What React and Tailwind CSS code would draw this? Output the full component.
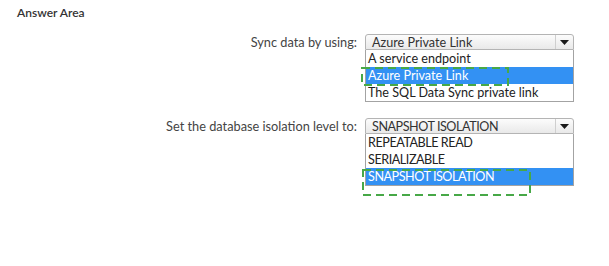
import React from "react";

const font = { fontFamily: "Lato, 'Open Sans', sans-serif" };

function Dropdown({ value, options, selected, mark, caps }) {
  const track = caps ? "tracking-[-0.45px]" : "";
  return (
    <div className="relative w-[209px]">
      {/* closed select header */}
      <div className="flex h-[16px] rounded-t-[3px] border border-[#b4b4b4] bg-gradient-to-b from-[#fcfcfc] to-[#e9e9e9]">
        <div className={`flex-1 pl-[6px] text-[12.6px] leading-[15px] text-[#333] overflow-hidden whitespace-nowrap ${track}`}>
          {value}
        </div>
        <div className="flex w-[18px] items-center justify-center border-l border-[#cfcfcf]">
          <svg width="9" height="5" viewBox="0 0 9 5">
            <path d="M0 0 L9 0 L4.5 5 Z" fill="#1a1a1a" />
          </svg>
        </div>
      </div>
      {/* open list */}
      <div className="border border-t-0 border-[#a3a3a3] bg-white">
        {options.map((o) => (
          <div
            key={o}
            className={`h-[17px] pl-[2px] text-[12.6px] leading-[17px] whitespace-nowrap ${track} ${
              o === selected ? "bg-[#3391f3] text-white" : "text-[#222]"
            }`}
          >
            {o}
          </div>
        ))}
      </div>
      {/* answer marker */}
      <svg
        className="absolute pointer-events-none"
        style={{ left: mark.x, top: mark.y }}
        width={mark.w}
        height={mark.h}
      >
        <rect
          x="1"
          y="1"
          width={mark.w - 2}
          height={mark.h - 2}
          fill="none"
          stroke="#47a847"
          strokeWidth="2"
          strokeDasharray="8 5"
        />
      </svg>
    </div>
  );
}

export default function App() {
  return (
    <div className="w-[609px] h-[266px] bg-white overflow-hidden" style={font}>
      <div className="pt-[5px] pl-[17px] text-[12px] leading-[16px] font-semibold text-[#333]">
        Answer Area
      </div>

      <div className="mt-[13px] flex items-start">
        <div className="w-[358px] pr-[1px] text-right text-[12.75px] leading-[16px] text-[#444]">
          Sync data by using:
        </div>
        <div className="ml-[7px]">
          <Dropdown
            value="Azure Private Link"
            options={["A service endpoint", "Azure Private Link", "The SQL Data Sync private link"]}
            selected="Azure Private Link"
            mark={{ x: -4, y: 33, w: 148, h: 19 }}
          />
        </div>
      </div>

      <div className="mt-[16px] flex items-start">
        <div className="w-[358px] pr-[1px] text-right text-[12.75px] leading-[16px] text-[#444]">
          Set the database isolation level to:
        </div>
        <div className="ml-[7px]">
          <Dropdown
            caps
            value="SNAPSHOT ISOLATION"
            options={["REPEATABLE READ", "SERIALIZABLE", "SNAPSHOT ISOLATION"]}
            selected="SNAPSHOT ISOLATION"
            mark={{ x: -3, y: 51, w: 169, h: 27 }}
          />
        </div>
      </div>
    </div>
  );
}
